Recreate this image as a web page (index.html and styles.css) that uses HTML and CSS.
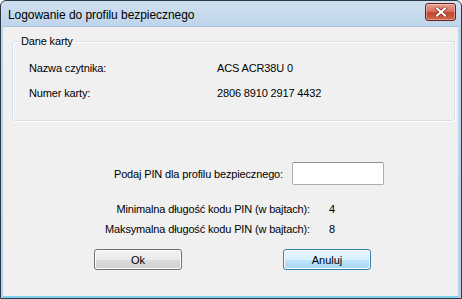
FILE: index.html
```html
<!DOCTYPE html>
<html lang="pl">
<head>
    <meta charset="UTF-8">
    <title>Logowanie do profilu bezpiecznego</title>
    <link rel="stylesheet" href="styles.css">
</head>
<body>

<div class="window">
    <!-- Pasek tytułu -->
    <div class="title-bar">
        <span class="title-text">Logowanie do profilu bezpiecznego</span>
        <button class="close-btn">
            <svg width="14" height="10" viewBox="0 0 14 10">
                <path d="M3 1.5 L11 8.5 M11 1.5 L3 8.5" stroke="#7a2a20" stroke-width="3.6" stroke-linecap="square"/>
                <path d="M3 1.5 L11 8.5 M11 1.5 L3 8.5" stroke="#ffffff" stroke-width="2.2" stroke-linecap="square"/>
            </svg>
        </button>
    </div>

    <!-- Obszar klienta -->
    <div class="client">
        <fieldset class="group">
            <legend>Dane karty</legend>
            <div class="row">
                <span class="row-label">Nazwa czytnika:</span>
                <span class="row-value">ACS ACR38U 0</span>
            </div>
            <div class="row">
                <span class="row-label">Numer karty:</span>
                <span class="row-value">2806 8910 2917 4432</span>
            </div>
        </fieldset>

        <div class="pin-row">
            <label class="pin-label" for="pin">Podaj PIN dla profilu bezpiecznego:</label>
            <input class="pin-input" id="pin" type="password">
        </div>

        <div class="info">
            <div class="info-row">
                <span class="info-label">Minimalna długość kodu PIN (w bajtach):</span>
                <span class="info-value">4</span>
            </div>
            <div class="info-row">
                <span class="info-label">Maksymalna długość kodu PIN (w bajtach):</span>
                <span class="info-value">8</span>
            </div>
        </div>

        <div class="buttons">
            <button class="btn">Ok</button>
            <button class="btn btn-default">Anuluj</button>
        </div>
    </div>
</div>

</body>
</html>
```

FILE: styles.css
```css
/* Ogólne */
body {
    margin: 0;
    padding: 0;
    font-family: "Liberation Sans", Arial, sans-serif;
    font-size: 11px;
    letter-spacing: -0.15px;
    color: #000;
    background: #ffffff;
}

/* Okno */
.window {
    width: 462px;
    height: 299px;
    box-sizing: border-box;
    border: 1px solid #2b3a47;
    border-radius: 6px 6px 0 0;
    background: linear-gradient(to bottom, #cfe0f0 0, #bfd5ea 25px, #b4d1e9 100%);
    padding: 0 3px 0 2px;
    display: flex;
    flex-direction: column;
}

/* Pasek tytułu */
.title-bar {
    height: 25px;
    display: flex;
    align-items: center;
    justify-content: space-between;
    padding-left: 5px;
    padding-right: 2px;
}

.title-text {
    font-size: 12px;
    letter-spacing: -0.05px;
    color: #000;
    margin-top: 3px;
}

.close-btn {
    width: 31px;
    height: 18px;
    margin-top: -3px;
    padding: 0;
    border: 1px solid #6b2218;
    border-radius: 3px;
    background: linear-gradient(to bottom, #e8a293 0, #d9735f 45%, #c3452d 55%, #d06a4e 100%);
    display: flex;
    align-items: center;
    justify-content: center;
    box-shadow: inset 0 0 0 1px rgba(255, 255, 255, 0.35);
}

/* Obszar klienta */
.client {
    flex: 1;
    background: #f0f0f0;
    border-top: 1px solid #a9c6df;
    border-bottom: 2px solid #7fd0ea;
    display: flex;
    flex-direction: column;
}

/* Ramka grupy */
.group {
    margin: 8px 3px 0 9px;
    padding: 8px 0 0 16px;
    height: 86px;
    box-sizing: border-box;
    border: 1px solid #d5dfe5;
    border-radius: 3px;
    box-shadow: inset 1px 1px 0 #ffffff, 1px 1px 0 #ffffff;
}

.group legend {
    padding: 0 2px;
    margin-left: -10px;
}

.row {
    display: flex;
    height: 25px;
    align-items: center;
}

.row-label {
    width: 188px;
}

/* PIN */
.pin-row {
    display: flex;
    align-items: center;
    margin-top: 41px;
}

.pin-label {
    width: 280px;
    text-align: right;
    margin-right: 9px;
}

.pin-input {
    width: 92px;
    height: 23px;
    box-sizing: border-box;
    border: 1px solid #abadb3;
    border-top-color: #8e9197;
    border-radius: 2px;
    background: #ffffff;
    margin: 0;
}

.info {
    margin-top: 14px;
    display: flex;
    flex-direction: column;
}

.info-row {
    display: flex;
    height: 20px;
    align-items: center;
}

.info-label {
    width: 307px;
    text-align: right;
    margin-right: 19px;
    white-space: nowrap;
}

/* Przyciski */
.buttons {
    display: flex;
    justify-content: space-between;
    margin: 10px 0 0 91px;
    width: 277px;
}

.btn {
    width: 88px;
    height: 21px;
    padding: 0;
    font-family: inherit;
    font-size: 11px;
    color: #000;
    border: 1px solid #707070;
    border-radius: 3px;
    background: linear-gradient(to bottom, #f2f2f2 0, #ebebeb 50%, #dddddd 51%, #cfcfcf 100%);
    box-shadow: inset 0 0 0 1px #fcfcfc;
}

.btn-default {
    border-color: #3c7fb1;
    background: linear-gradient(to bottom, #eaf6fd 0, #d9f0fc 50%, #bee6fd 51%, #a7d9f5 100%);
}
```
